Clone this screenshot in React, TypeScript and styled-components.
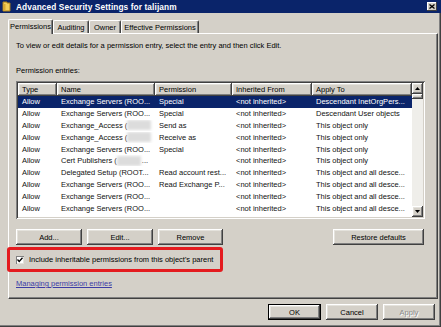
import styled, { createGlobalStyle } from "styled-components";

const GlobalStyle = createGlobalStyle`
  html, body {
    margin: 0;
    padding: 0;
    background: #d4d0c8;
  }
  body {
    font-family: "Liberation Sans", Arial, sans-serif;
    font-size: 7.5px;
    color: #000;
  }
`;

type Row = {
  type: string;
  name: string;
  blur?: boolean;
  tail?: string;
  permission: string;
  inherited: string;
  applyTo: string;
};

const rows: Row[] = [
  { type: "Allow", name: "Exchange Servers (ROO...", permission: "Special", inherited: "<not inherited>", applyTo: "Descendant InetOrgPers..." },
  { type: "Allow", name: "Exchange Servers (ROO...", permission: "Special", inherited: "<not inherited>", applyTo: "Descendant User objects" },
  { type: "Allow", name: "Exchange_Access (", blur: true, permission: "Send as", inherited: "<not inherited>", applyTo: "This object only" },
  { type: "Allow", name: "Exchange_Access (", blur: true, permission: "Receive as", inherited: "<not inherited>", applyTo: "This object only" },
  { type: "Allow", name: "Exchange Servers (ROO...", permission: "Special", inherited: "<not inherited>", applyTo: "This object only" },
  { type: "Allow", name: "Cert Publishers (", blur: true, tail: "...", permission: "", inherited: "<not inherited>", applyTo: "This object only" },
  { type: "Allow", name: "Delegated Setup (ROOT...", permission: "Read account rest...", inherited: "<not inherited>", applyTo: "This object and all desce..." },
  { type: "Allow", name: "Exchange Servers (ROO...", permission: "Read Exchange P...", inherited: "<not inherited>", applyTo: "This object and all desce..." },
  { type: "Allow", name: "Exchange Servers (ROO...", permission: "", inherited: "<not inherited>", applyTo: "This object and all desce..." },
  { type: "Allow", name: "Exchange Servers (ROO...", permission: "", inherited: "<not inherited>", applyTo: "This object and all desce..." },
  { type: "Allow", name: "Exchange Servers (ROO...", permission: "Read Exchange In...", inherited: "<not inherited>", applyTo: "This object and all desce..." },
];

const columns = ["Type", "Name", "Permission", "Inherited From", "Apply To"];
const colTemplate = "39px 98px 77px 80px 100px";

const raised = `
  box-shadow: inset -1px -1px #404040, inset 1px 1px #ffffff,
    inset -2px -2px #808080, inset 2px 2px #e4e2dc;
`;

const App = () => {
  return (
    <>
      <GlobalStyle />
      <Window>
        <TitleBar>
          <svg width="9" height="11" viewBox="0 0 9 11">
            <path d="M1 1 L5 1 L5 2 L8 2 L8 10 L1 10 Z" fill="#f2cf5a" stroke="#a67c1a" strokeWidth="1" />
            <rect x="1.5" y="3" width="2" height="7" fill="#d9a933" />
          </svg>
          <TitleText>Advanced Security Settings for talijanm</TitleText>
          <CloseButton>
            <svg width="6" height="5" viewBox="0 0 6 5">
              <path d="M0.5 0.5 L5.5 4.5 M5.5 0.5 L0.5 4.5" stroke="#000" strokeWidth="1.3" />
            </svg>
          </CloseButton>
        </TitleBar>

        <Body>
          <TabStrip>
            <Tab $active $w={45}>Permissions</Tab>
            <Tab $w={36}>Auditing</Tab>
            <Tab $w={32}>Owner</Tab>
            <Tab $w={78}>Effective Permissions</Tab>
          </TabStrip>

          <Panel>
            <Description>
              To view or edit details for a permission entry, select the entry and then click Edit.
            </Description>
            <Label>Permission entries:</Label>

            <ListBox>
              <ListColumns>
                <HeaderRow>
                  {columns.map((c) => (
                    <HeaderCell key={c}>{c}</HeaderCell>
                  ))}
                </HeaderRow>
                {rows.map((r, idx) => (
                  <EntryRow key={idx} $selected={idx === 0}>
                    <Cell>{r.type}</Cell>
                    <Cell>
                      {r.name}
                      {r.blur && <Smudge />}
                      {r.tail}
                    </Cell>
                    <Cell>{r.permission}</Cell>
                    <Cell>{r.inherited}</Cell>
                    <Cell>{r.applyTo}</Cell>
                  </EntryRow>
                ))}
              </ListColumns>
              <ScrollBar>
                <ArrowButton>
                  <svg width="5" height="3" viewBox="0 0 5 3">
                    <path d="M2.5 0 L5 3 L0 3 Z" fill="#000" />
                  </svg>
                </ArrowButton>
                <Thumb />
                <Track />
                <ArrowButton>
                  <svg width="5" height="3" viewBox="0 0 5 3">
                    <path d="M0 0 L5 0 L2.5 3 Z" fill="#000" />
                  </svg>
                </ArrowButton>
              </ScrollBar>
            </ListBox>

            <ButtonRow>
              <Button $w={66}>Add...</Button>
              <Button $w={66}>Edit...</Button>
              <Button $w={65}>Remove</Button>
              <Spacer />
              <Button $w={91}>Restore defaults</Button>
            </ButtonRow>

            <Highlight>
              <CheckBox>
                <svg width="6" height="6" viewBox="0 0 6 6">
                  <path d="M0.5 2.5 L2.2 4.5 L5.5 0.8" stroke="#000" strokeWidth="1.3" fill="none" />
                </svg>
              </CheckBox>
              <CheckLabel>Include inheritable permissions from this object's parent</CheckLabel>
            </Highlight>

            <HelpLink href="#">Managing permission entries</HelpLink>
          </Panel>

          <Footer>
            <Button $w={53} $default>OK</Button>
            <Button $w={52}>Cancel</Button>
            <Button $w={52} $disabled>Apply</Button>
          </Footer>
        </Body>
      </Window>
    </>
  );
};

const Window = styled.div`
  width: 441px;
  height: 327px;
  background: #d4d0c8;
  display: flex;
  flex-direction: column;
  box-shadow: inset -1px -1px #404040, inset -2px -2px #808080;
  overflow: hidden;
`;

const TitleBar = styled.div`
  height: 13px;
  background: #0a246a;
  display: flex;
  align-items: center;
  padding: 0 4px 0 2px;
  gap: 5px;
`;

const TitleText = styled.span`
  flex: 1;
  color: #ffffff;
  font-weight: bold;
  font-size: 8.3px;
  letter-spacing: 0.1px;
`;

const CloseButton = styled.div`
  width: 10px;
  height: 9px;
  background: #d4d0c8;
  display: flex;
  align-items: center;
  justify-content: center;
  box-shadow: inset -1px -1px #404040, inset 1px 1px #ffffff;
`;

const Body = styled.div`
  display: flex;
  flex-direction: column;
  padding: 5px 3px 0 8px;
`;

const TabStrip = styled.div`
  display: flex;
  align-items: flex-end;
  height: 15px;
`;

const Tab = styled.div<{ $active?: boolean; $w: number }>`
  width: ${(p) => p.$w}px;
  height: ${(p) => (p.$active ? 15 : 13)}px;
  box-sizing: border-box;
  display: flex;
  align-items: center;
  justify-content: center;
  white-space: nowrap;
  background: #d4d0c8;
  border-top: 1px solid #ffffff;
  border-left: 1px solid #ffffff;
  border-right: 1px solid #404040;
  box-shadow: inset -1px 0 #808080;
  border-radius: 2px 2px 0 0;
  position: relative;
  z-index: ${(p) => (p.$active ? 2 : 0)};
  margin-bottom: ${(p) => (p.$active ? -1 : 0)}px;
  padding-bottom: ${(p) => (p.$active ? 2 : 0)}px;
`;

const Panel = styled.div`
  height: 266px;
  box-sizing: border-box;
  display: flex;
  flex-direction: column;
  align-items: flex-start;
  padding: 0 11px 0 7px;
  border-top: 1px solid #ffffff;
  border-left: 1px solid #ffffff;
  border-right: 1px solid #404040;
  border-bottom: 1px solid #404040;
  box-shadow: inset -1px -1px #808080;
`;

const Description = styled.div`
  margin-top: 7px;
  line-height: 10px;
  white-space: nowrap;
`;

const Label = styled.div`
  margin-top: 15px;
  line-height: 10px;
`;

const ListBox = styled.div`
  margin-top: 5px;
  width: 409px;
  height: 138px;
  box-sizing: border-box;
  padding: 2px;
  background: #ffffff;
  display: flex;
  box-shadow: inset 1px 1px #808080, inset -1px -1px #ffffff,
    inset 2px 2px #404040, inset -2px -2px #d4d0c8;
  overflow: hidden;
`;

const ListColumns = styled.div`
  flex: 1;
  display: flex;
  flex-direction: column;
  overflow: hidden;
`;

const HeaderRow = styled.div`
  display: grid;
  grid-template-columns: ${colTemplate};
  height: 13px;
  flex-shrink: 0;
`;

const HeaderCell = styled.div`
  background: #d4d0c8;
  display: flex;
  align-items: center;
  padding-left: 4px;
  white-space: nowrap;
  overflow: hidden;
  ${raised}
`;

const EntryRow = styled.div<{ $selected?: boolean }>`
  display: grid;
  grid-template-columns: ${colTemplate};
  height: 11.8px;
  flex-shrink: 0;
  align-items: center;
  background: ${(p) => (p.$selected ? "#0a246a" : "transparent")};
  color: ${(p) => (p.$selected ? "#ffffff" : "#111111")};
`;

const Cell = styled.div`
  padding-left: 4px;
  white-space: nowrap;
  overflow: hidden;
  display: flex;
  align-items: center;
  line-height: 11px;
`;

const Smudge = styled.span`
  display: inline-block;
  width: 24px;
  height: 10px;
  background: #dcdcdc;
  filter: blur(1.5px);
  margin-right: 1px;
`;

const ScrollBar = styled.div`
  width: 11px;
  display: flex;
  flex-direction: column;
  background: #efeeea;
`;

const ArrowButton = styled.div`
  width: 11px;
  height: 11px;
  flex-shrink: 0;
  background: #d4d0c8;
  display: flex;
  align-items: center;
  justify-content: center;
  ${raised}
`;

const Thumb = styled.div`
  height: 5px;
  background: #d4d0c8;
  ${raised}
`;

const Track = styled.div`
  flex: 1;
`;

const ButtonRow = styled.div`
  margin-top: 10px;
  width: 408px;
  display: flex;
  gap: 5px;
`;

const Spacer = styled.div`
  flex: 1;
`;

const Button = styled.div<{ $w: number; $default?: boolean; $disabled?: boolean }>`
  width: ${(p) => p.$w}px;
  height: 16px;
  box-sizing: border-box;
  display: flex;
  align-items: center;
  justify-content: center;
  background: #d4d0c8;
  white-space: nowrap;
  color: ${(p) => (p.$disabled ? "#8a8a8a" : "#000")};
  text-shadow: ${(p) => (p.$disabled ? "1px 1px #ffffff" : "none")};
  border: ${(p) => (p.$default ? "1px solid #000" : "none")};
  ${raised}
`;

const Highlight = styled.div`
  margin-top: 2px;
  margin-left: -9px;
  width: 216px;
  height: 25px;
  box-sizing: border-box;
  border: 3px solid #e41b1f;
  border-radius: 3px;
  display: flex;
  align-items: center;
  padding-left: 6px;
  gap: 5px;
`;

const CheckBox = styled.div`
  width: 8px;
  height: 8px;
  box-sizing: border-box;
  background: #ffffff;
  display: flex;
  align-items: center;
  justify-content: center;
  box-shadow: inset 1px 1px #808080, inset -1px -1px #e4e2dc;
`;

const CheckLabel = styled.span`
  white-space: nowrap;
`;

const HelpLink = styled.a`
  margin-top: 7px;
  line-height: 10px;
  color: #3c3ca6;
  text-decoration: underline;
`;

const Footer = styled.div`
  margin-top: 5px;
  display: flex;
  justify-content: flex-end;
  gap: 5px;
  padding-right: 3px;
`;

export default App;
